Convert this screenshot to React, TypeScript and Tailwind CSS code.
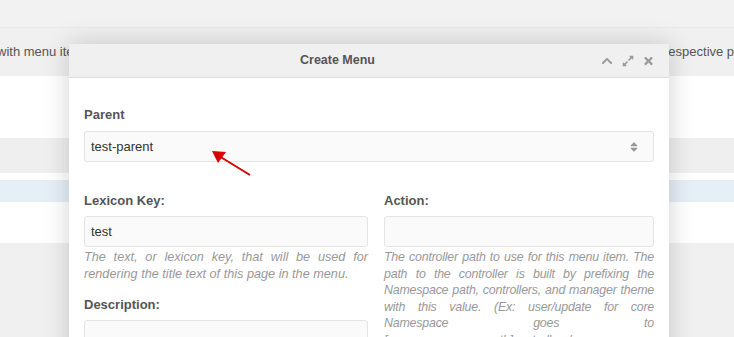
import React from 'react';
import { FaChevronUp, FaExpandAlt, FaTimes, FaSort } from 'react-icons/fa';

const font = { fontFamily: '"Liberation Sans", Arial, sans-serif' };

const actionHelp = [
  'The controller path to use for this menu item. The',
  'path to the controller is built by prefixing the',
  'Namespace path, controllers, and manager theme',
  'with this value. (Ex: user/update for core',
  'Namespace goes to',
];

function Field({ label, value, children }: { label: string; value?: string; children?: React.ReactNode }) {
  return (
    <div className="flex flex-col">
      <label className="text-[13px] leading-[20px] font-bold text-[#555]">{label}</label>
      <div className="mt-[5px] h-[31px] rounded-[3px] border border-[#e4e4e4] bg-[#fafafa] px-[6px] flex items-center text-[13px] text-[#333]">
        {value}
      </div>
      {children}
    </div>
  );
}

export default function App() {
  return (
    <div className="relative w-[734px] h-[337px] overflow-hidden bg-[#f2f2f2]" style={font}>
      {/* page behind the window */}
      <div className="flex flex-col">
        <div className="h-[27px]" />
        <div className="h-[49px] bg-[#f0f0f0] border-t border-[#e9e9e9] flex items-center justify-between text-[13px] text-[#555]">
          <span className="-ml-[3px] whitespace-nowrap">with menu items</span>
          <span className="whitespace-nowrap w-[70px] shrink-0 overflow-hidden">respective page</span>
        </div>
        <div className="h-[62px] bg-white" />
        <div className="h-[35px] bg-[#efefef]" />
        <div className="h-[7px] bg-white" />
        <div className="h-[22px] bg-[#e6eef6]" />
        <div className="h-[41px] bg-white" />
        <div className="h-[94px] bg-[#f0f0f0]" />
      </div>

      {/* Create Menu window */}
      <div className="absolute left-[69px] top-[44px] w-[600px] bg-white shadow-[0_0_24px_rgba(0,0,0,0.18)]">
        <div className="h-[34px] bg-[#f0f0f0] border-b border-[#dcdcdc] flex items-center pl-[15px] pr-[15px]">
          <div className="flex-1 text-center text-[12.5px] font-bold text-[#555]">Create Menu</div>
          <div className="ml-[10px] flex items-center gap-[9px] text-[#999]">
            <FaChevronUp className="w-[12px] h-[12px]" />
            <FaExpandAlt className="w-[12px] h-[12px]" />
            <FaTimes className="w-[11px] h-[12px]" />
          </div>
        </div>

        <div className="px-[15px] pt-[27px] pb-[20px] flex flex-col">
          <div className="flex flex-col">
            <label className="text-[13px] leading-[20px] font-bold text-[#555]">Parent</label>
            <div className="mt-[6px] h-[31px] rounded-[3px] border border-[#e4e4e4] bg-[#fafafa] pl-[6px] pr-[14px] flex items-center justify-between text-[13px] text-[#333]">
              <span>test-parent</span>
              <FaSort className="w-[10px] h-[12px] text-[#999]" />
            </div>
          </div>

          <div className="mt-[29px] grid grid-cols-[284px_270px] gap-x-[16px]">
            <div className="flex flex-col gap-[13px]">
              <Field label="Lexicon Key:" value="test">
                <p className="mt-[2px] text-[12.7px] leading-[16.5px] italic text-[#999] text-justify">
                  The text, or lexicon key, that will be used for rendering the title text of this page in the menu.
                </p>
              </Field>
              <Field label="Description:" />
            </div>
            <div className="flex flex-col">
              <Field label="Action:">
                <div className="mt-[2px] text-[12.4px] leading-[16.6px] italic text-[#999] tracking-[-0.2px] [word-spacing:-1px]">
                  {actionHelp.map((line) => (
                    <div key={line} className="whitespace-nowrap text-justify [text-align-last:justify]">
                      {line}
                    </div>
                  ))}
                  <div className="whitespace-nowrap">[core_namespace_path]controllers/</div>
                </div>
              </Field>
            </div>
          </div>
        </div>
      </div>

      {/* red annotation arrow */}
      <svg className="absolute left-[205px] top-[145px]" width="50" height="35" viewBox="0 0 50 35">
        <line x1="45" y1="30" x2="14" y2="11" stroke="#d80000" strokeWidth="2" />
        <polygon points="7,6 21,7 13,18" fill="#d80000" />
      </svg>
    </div>
  );
}
